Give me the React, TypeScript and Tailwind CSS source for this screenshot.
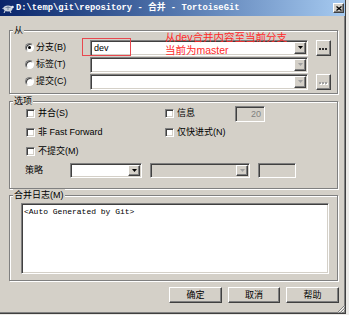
import React from 'react'

const sunken =
  'border border-t-[#808080] border-l-[#808080] border-b-white border-r-white shadow-[inset_1px_1px_0_#404040,inset_-1px_-1px_0_#d4d0c8]'
const raised =
  'border border-t-white border-l-white border-b-[#404040] border-r-[#404040] shadow-[inset_-1px_-1px_0_#808080] bg-[#d4d0c8]'

function Arrow({ disabled }: { disabled?: boolean }) {
  return (
    <svg width="5" height="3" viewBox="0 0 5 3">
      <path d="M0 0H5L2.5 3Z" fill={disabled ? '#a0a0a0' : '#000'} />
    </svg>
  )
}

function Combo({
  width,
  height,
  value,
  disabled,
  grey,
}: {
  width: string
  height: string
  value?: string
  disabled?: boolean
  grey?: boolean
}) {
  return (
    <div className={`${sunken} ${width} ${height} flex p-[1px] ${grey ? 'bg-[#d4d0c8]' : 'bg-white'}`}>
      <div className="flex-1 pl-[2px] leading-[12px] text-[9px]">{value}</div>
      <div className={`${raised} w-[12px] flex items-center justify-center`}>
        <Arrow disabled={disabled} />
      </div>
    </div>
  )
}

function Radio({ checked, label }: { checked?: boolean; label: string }) {
  return (
    <div className="flex items-center gap-[2px]">
      <div className="w-[9px] h-[9px] rounded-full border border-t-[#808080] border-l-[#808080] border-b-white border-r-white bg-white flex items-center justify-center shadow-[inset_1px_1px_0_#404040]">
        {checked && <div className="w-[3px] h-[3px] rounded-full bg-black" />}
      </div>
      <span>{label}</span>
    </div>
  )
}

function Check({ label }: { label: string }) {
  return (
    <div className="flex items-center gap-[3px]">
      <div className={`${sunken} w-[9px] h-[9px] bg-white`} />
      <span>{label}</span>
    </div>
  )
}

function DotsButton({ disabled }: { disabled?: boolean }) {
  const c = disabled ? '#a0a0a0' : '#303030'
  return (
    <div className={`${raised} ml-[8px] w-[15px] h-[16px] flex items-center justify-center pt-[3px]`}>
      <svg width="9" height="3" viewBox="0 0 9 3">
        {disabled && (
          <g fill="#fff">
            <rect x="1" y="1" width="2" height="2" />
            <rect x="4" y="1" width="2" height="2" />
            <rect x="7" y="1" width="2" height="2" />
          </g>
        )}
        <g fill={c}>
          <rect x="0" y="0" width="2" height="2" />
          <rect x="3" y="0" width="2" height="2" />
          <rect x="6" y="0" width="2" height="2" />
        </g>
      </svg>
    </div>
  )
}

function Group({ label, className, children }: { label: string; className: string; children: React.ReactNode }) {
  return (
    <div
      className={`relative border border-[#808080] shadow-[inset_1px_1px_0_#fff,1px_1px_0_#fff] ${className}`}
    >
      <span className="absolute -top-[7px] left-[3px] px-[1px] bg-[#d4d0c8] leading-[12px]">{label}</span>
      {children}
    </div>
  )
}

function Button({ label, width }: { label: string; width: string }) {
  return (
    <div className={`${raised} ${width} h-[16px] flex items-center justify-center leading-[12px]`}>{label}</div>
  )
}

export default function App() {
  return (
    <div className="relative w-[349px] h-[315px] overflow-hidden bg-[#ecebe8] text-[9px] text-black font-['Liberation_Sans','Noto_Sans_CJK_SC',sans-serif]">
      <div className="flex flex-col w-[346px] h-[314px] bg-[#d4d0c8] border-r border-b border-r-[#404040] border-b-[#404040] shadow-[inset_-1px_-1px_0_#808080]">
        {/* title bar */}
        <div className="h-[16px] flex items-center bg-gradient-to-r from-[#0a246a] to-[#a6caf0]">
          <svg width="12" height="12" viewBox="0 0 12 12" className="ml-[2px]">
            <ellipse cx="6" cy="6.5" rx="4.5" ry="3" fill="#c8d0dc" />
            <circle cx="10.5" cy="5" r="1.3" fill="#e8ecf2" />
            <path d="M3 9L2 11M8 9L9 11M2 6L0.5 6.5" stroke="#e0e4ea" strokeWidth="1" />
            <path d="M3.5 5.5H8.5M6 4V8" stroke="#6a7c96" strokeWidth="0.8" />
          </svg>
          <span className="ml-[2px] text-white font-bold text-[8.8px] leading-[12px] font-['Liberation_Mono','Noto_Sans_CJK_SC',monospace]">
            D:\temp\git\repository - 合并 - TortoiseGit
          </span>
          <div className={`${raised} ml-auto mr-[1px] w-[11px] h-[10px] flex items-center justify-center`}>
            <svg width="6" height="5" viewBox="0 0 6 5">
              <path d="M0.5 0.5L5.5 4.5M5.5 0.5L0.5 4.5" stroke="#000" strokeWidth="1.3" />
            </svg>
          </div>
        </div>

        <div className="flex flex-col pl-[9px] pr-[7px]">
          {/* 从 */}
          <Group label="从" className="mt-[14px] pt-[8px] pb-[3px] pl-[15px]">
            <div className="flex items-center h-[17px]">
              <div className="w-[65px]">
                <Radio checked label="分支(B)" />
              </div>
              <Combo width="w-[218px]" height="h-[16px]" value="dev" />
              <DotsButton />
            </div>
            <div className="flex items-center h-[17px]">
              <div className="w-[65px]">
                <Radio label="标签(T)" />
              </div>
              <Combo width="w-[218px]" height="h-[16px]" disabled />
            </div>
            <div className="flex items-center h-[17px]">
              <div className="w-[65px]">
                <Radio label="提交(C)" />
              </div>
              <Combo width="w-[218px]" height="h-[16px]" disabled />
              <DotsButton disabled />
            </div>
          </Group>

          {/* 选项 */}
          <Group label="选项" className="mt-[7px] pt-[2px] pb-[10px] pl-[16px]">
            <div className="flex items-center h-[19px]">
              <div className="w-[139px]">
                <Check label="并合(S)" />
              </div>
              <div className="w-[70px]">
                <Check label="信息" />
              </div>
              <div className={`${sunken} w-[30px] h-[16px] bg-[#d4d0c8] text-right pr-[3px] leading-[14px] text-[#808080]`}>
                20
              </div>
            </div>
            <div className="flex items-center h-[19px]">
              <div className="w-[139px]">
                <Check label="非 Fast Forward" />
              </div>
              <Check label="仅快进式(N)" />
            </div>
            <div className="flex items-center h-[19px]">
              <Check label="不提交(M)" />
            </div>
            <div className="flex items-center mt-[2px] h-[15px]">
              <span className="w-[45px] -ml-[1px]">策略</span>
              <Combo width="w-[72px]" height="h-[15px]" />
              <div className="ml-[8px]">
                <Combo width="w-[100px]" height="h-[15px]" disabled grey />
              </div>
              <div className={`${sunken} ml-[8px] w-[38px] h-[15px] bg-[#d4d0c8]`} />
            </div>
          </Group>

          {/* 合并日志 */}
          <Group label="合并日志(M)" className="mt-[6px] pt-[7px] pb-[6px] pl-[11px] pr-[8px]">
            <div className={`${sunken} h-[71px] bg-white px-[2px] pt-[3px] text-[8px] leading-[10px] font-['Liberation_Mono',monospace]`}>
              {'<Auto Generated by Git>'}
            </div>
          </Group>

          <div className="flex justify-end gap-[6px] mt-[6px] -mr-[1px]">
            <Button label="确定" width="w-[53px]" />
            <Button label="取消" width="w-[52px]" />
            <Button label="帮助" width="w-[53px]" />
          </div>
        </div>
      </div>

      {/* size grip */}
      <svg width="8" height="8" viewBox="0 0 8 8" className="absolute left-[337px] top-[305px]">
        <path d="M7 1L1 7M7 4L4 7" stroke="#808080" strokeWidth="1" />
        <path d="M7.5 1.5L1.5 7.5M7.5 4.5L4.5 7.5" stroke="#fff" strokeWidth="0.8" />
      </svg>

      {/* annotation */}
      <div className="absolute left-[82px] top-[38px] w-[49px] h-[18px] border border-[#e8484f]" />
      <div className="absolute left-[165px] top-[31px] text-[10.5px] leading-[13px] text-[#ff2a2a] font-['Liberation_Sans','Noto_Sans_CJK_SC',sans-serif]">
        <div>从dev合并内容至当前分支</div>
        <div>当前为master</div>
      </div>
    </div>
  )
}
